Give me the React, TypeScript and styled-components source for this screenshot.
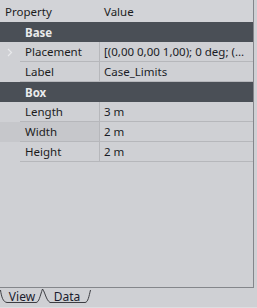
import styled, { createGlobalStyle } from 'styled-components';

const GlobalStyle = createGlobalStyle`
  html, body {
    margin: 0;
    padding: 0;
    background: #cfd0d4;
  }
  body {
    font-family: "Noto Sans", "Open Sans", sans-serif;
    font-size: 11.5px;
    color: #1c1c1c;
  }
`;

const Frame = styled.div`
  width: 257px;
  height: 308px;
  display: flex;
  flex-direction: column;
  background: #cfd0d4;
  overflow: hidden;
`;

const Panel = styled.div`
  width: 254px;
  height: 288px;
  box-sizing: border-box;
  border-right: 1px solid #84868b;
  border-bottom: 1px solid #84868b;
  display: flex;
  flex-direction: column;
`;

const HeaderRow = styled.div`
  height: 22px;
  display: grid;
  grid-template-columns: 100px 1fr;
  align-items: center;
  background: #d2d3d7;
  span {
    padding-left: 5px;
    padding-top: 1px;
  }
  span + span {
    padding-left: 4px;
  }
`;

const GroupRow = styled.div`
  height: 20px;
  display: flex;
  align-items: center;
  padding-left: 25px;
  background: #4a4f56;
  color: #e9eaec;
  font-weight: bold;
`;

const PropRow = styled.div<{ $hover?: boolean }>`
  height: 20px;
  display: grid;
  grid-template-columns: 20px 80px 1fr;
  background: ${(p) => (p.$hover ? 'linear-gradient(to right, #c6c7cb 100px, #cfd0d4 100px)' : '#cfd0d4')};
`;

const Gutter = styled.div`
  display: flex;
  align-items: center;
  justify-content: center;
`;

const NameCell = styled.div`
  box-sizing: border-box;
  border-right: 1px solid #b6b7bb;
  border-bottom: 1px solid #b6b7bb;
  padding-left: 5px;
  display: flex;
  align-items: center;
  white-space: nowrap;
`;

const ValueCell = styled.div`
  box-sizing: border-box;
  border-bottom: 1px solid #b6b7bb;
  padding-left: 4px;
  padding-right: 6px;
  line-height: 19px;
  white-space: nowrap;
  overflow: hidden;
  text-overflow: ellipsis;
  color: #1a1c26;
`;

const TabStrip = styled.div`
  height: 20px;
  display: flex;
  align-items: flex-start;
  border-bottom: 1px solid #dcdde0;
  box-sizing: border-box;
`;

const Tab = styled.div<{ $width: number; $overlap?: boolean }>`
  position: relative;
  width: ${(p) => p.$width}px;
  height: 18px;
  margin-left: ${(p) => (p.$overlap ? '-2px' : '0')};
  display: flex;
  justify-content: center;
  padding-top: 2px;
  box-sizing: border-box;
  line-height: 14px;
  font-size: 12px;
  color: #1a1c2e;
  svg {
    position: absolute;
    left: 0;
    top: 0;
  }
`;

const Chevron = () => (
  <svg width="6" height="9" viewBox="0 0 6 9">
    <path d="M1 1 L4.5 4.5 L1 8" fill="none" stroke="#e8e9eb" strokeWidth="1.2" />
  </svg>
);

type Row = { name: string; value: string; chevron?: boolean; hover?: boolean };
type Group = { title: string; rows: Row[] };

const groups: Group[] = [
  {
    title: 'Base',
    rows: [
      { name: 'Placement', value: '[(0,00 0,00 1,00); 0 deg; (0,00 0,00 0,00)]', chevron: true },
      { name: 'Label', value: 'Case_Limits' },
    ],
  },
  {
    title: 'Box',
    rows: [
      { name: 'Length', value: '3 m' },
      { name: 'Width', value: '2 m', hover: true },
      { name: 'Height', value: '2 m' },
    ],
  },
];

function App() {
  return (
    <Frame>
      <GlobalStyle />
      <Panel>
        <HeaderRow>
          <span>Property</span>
          <span>Value</span>
        </HeaderRow>
        {groups.map((g) => (
          <div key={g.title}>
            <GroupRow>{g.title}</GroupRow>
            {g.rows.map((r) => (
              <PropRow key={r.name} $hover={r.hover}>
                <Gutter>{r.chevron && <Chevron />}</Gutter>
                <NameCell>{r.name}</NameCell>
                <ValueCell>{r.value}</ValueCell>
              </PropRow>
            ))}
          </div>
        ))}
      </Panel>
      <TabStrip>
        <Tab $width={44}>
          <svg width="44" height="18" viewBox="0 0 44 18">
            <path d="M0.5 2 C1.5 9 3 14 7 14.5 L36 14.5 C39 14.5 40 8 42.5 1" fill="none" stroke="#3c3d42" strokeWidth="1" />
          </svg>
          <span>View</span>
        </Tab>
        <Tab $width={50} $overlap>
          <svg width="50" height="18" viewBox="0 0 50 18">
            <path d="M0.5 1 C3 4 4 12 8 14.5 L43 14.5 C46 14.5 47 8 48.5 2" fill="none" stroke="#3c3d42" strokeWidth="1" />
          </svg>
          <span>Data</span>
        </Tab>
      </TabStrip>
    </Frame>
  );
}

export default App;
